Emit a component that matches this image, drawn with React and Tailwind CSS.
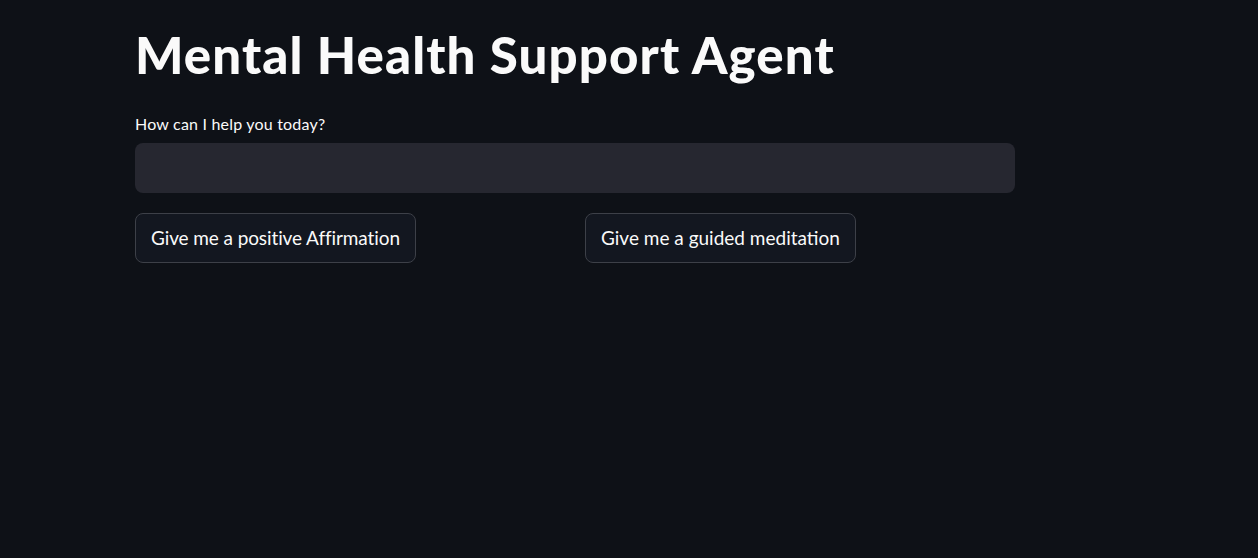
export default function App() {
  return (
    <div className="min-h-[558px] w-full bg-[#0e1117] text-[#fafafa] font-['Lato','Noto_Sans',sans-serif]">
      <div className="ml-[135px] w-[880px] pt-[22px]">
        <h1 className="text-[51px] font-black leading-[66px] tracking-[1.1px]">
          Mental Health Support Agent
        </h1>
        <label className="mt-[25px] block text-[16px] leading-[22px] tracking-[0.2px]">
          How can I help you today?
        </label>
        <input
          className="mt-[8px] block h-[50px] w-full rounded-lg bg-[#262730] px-4 text-[16px] outline-none"
          type="text"
        />
        <div className="mt-[20px] grid grid-cols-2 gap-[20px]">
          <div>
            <button className="h-[50px] rounded-lg border border-[#3d4048] bg-[#131720] px-[15px] text-[19px] tracking-[-0.1px]">
              Give me a positive Affirmation
            </button>
          </div>
          <div>
            <button className="h-[50px] rounded-lg border border-[#3d4048] bg-[#131720] px-[15px] text-[19px]">
              Give me a guided meditation
            </button>
          </div>
        </div>
      </div>
    </div>
  );
}
